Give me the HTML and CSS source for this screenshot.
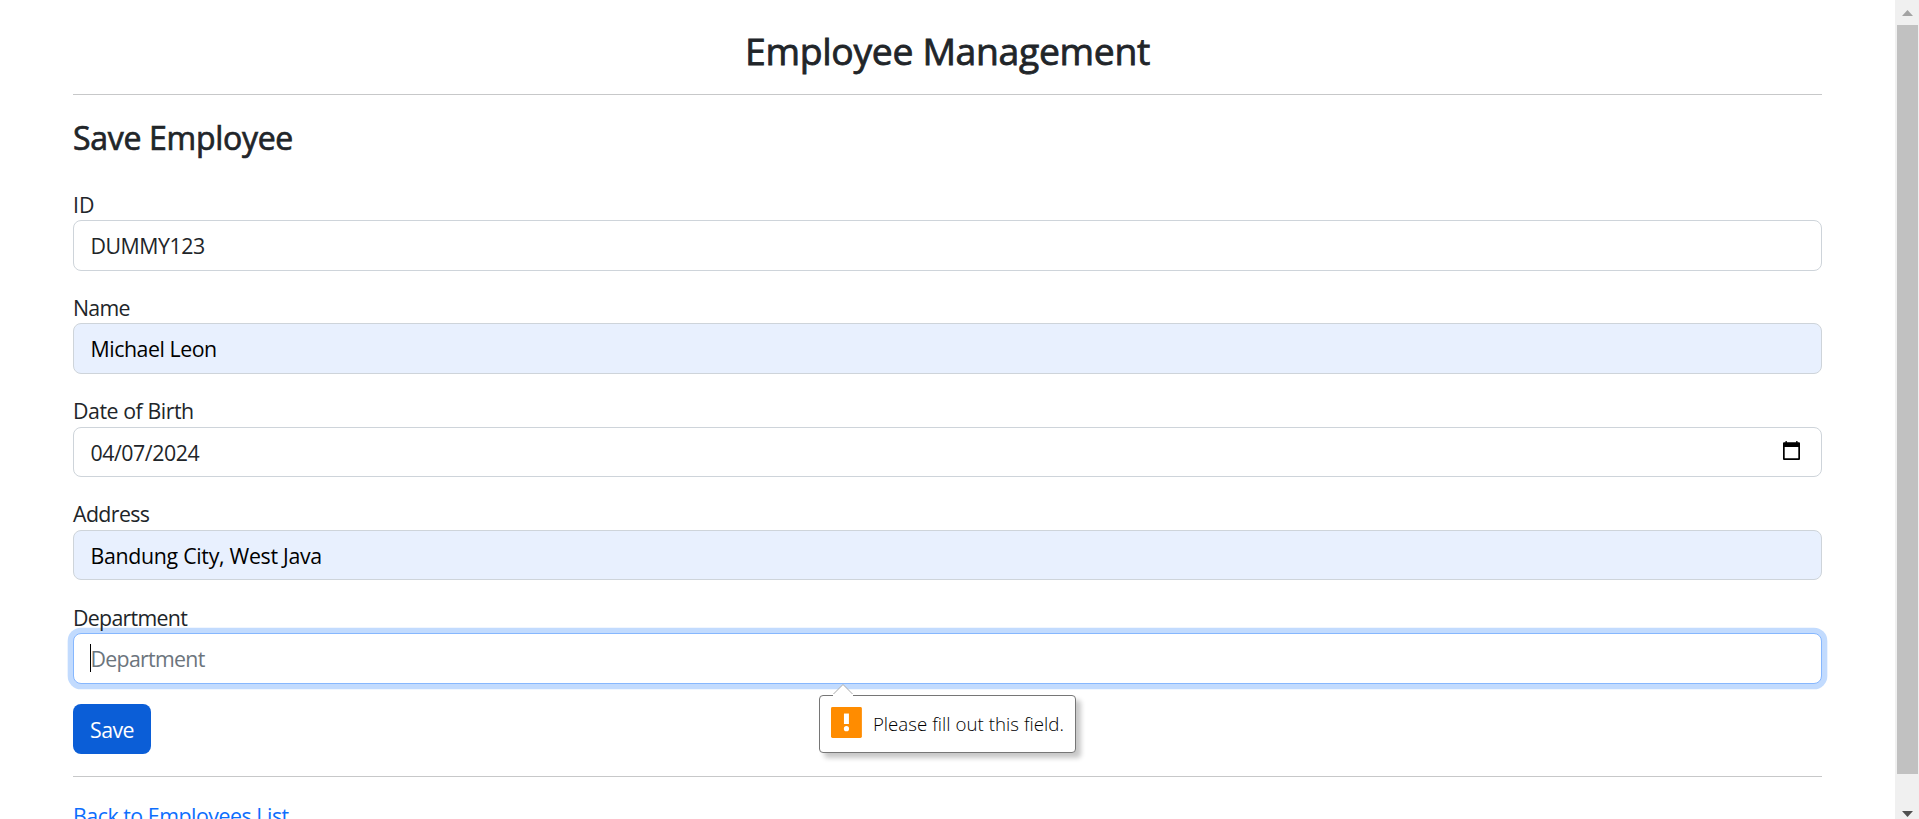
FILE: index.html
```html
<!DOCTYPE html>
<html lang="en">
<head>
<meta charset="utf-8">
<title>Employee Management</title>
<link rel="stylesheet" href="styles.css">
</head>
<body>
<div class="viewport">
  <main class="page">
    <h2 class="title"><span class="title-text">Employee Management</span></h2>
    <hr class="rule">
    <h3 class="subtitle"><span class="subtitle-text">Save Employee</span></h3>
    <form class="form">
      <div class="group">
        <label class="label"><span class="t-id">ID</span></label>
        <div class="control"><span class="t-dummy">DUMMY123</span></div>
      </div>
      <div class="group">
        <label class="label"><span class="t-name">Name</span></label>
        <div class="control autofill"><span class="t-michael">Michael Leon</span></div>
      </div>
      <div class="group">
        <label class="label raised"><span class="t-dob">Date of Birth</span></label>
        <div class="control date"><span class="t-date">04/07/2024</span>
          <svg class="calendar" viewBox="0 0 17 19" width="17" height="19"><path fill="#000" fill-rule="evenodd" d="M2.500 0h1.300v1.300h9.400V0h1.300v1.300H16a1 1 0 0 1 1 1V18a1 1 0 0 1-1 1H1a1 1 0 0 1-1-1V2.300a1 1 0 0 1 1-1h1.500zM1.700 6v11.300h13.600V6z"/></svg>
        </div>
      </div>
      <div class="group">
        <label class="label raised"><span class="t-address">Address</span></label>
        <div class="control autofill lowered"><span class="t-bandung">Bandung City, West Java</span></div>
      </div>
      <div class="group last">
        <label class="label"><span class="t-department">Department</span></label>
        <div class="control focused"><span class="caret"></span><span class="placeholder t-department">Department</span>
          <div class="bubble">
            <svg class="bubble-arrow" width="20" height="12" viewBox="0 0 20 12"><path d="M0 10.500 10 .5l10 10V12H0z" fill="#fff"/><path d="M.5 10 10 .5 19.500 10" fill="none" stroke="#aaa"/></svg>
            <svg class="warn" width="31" height="31" viewBox="0 0 31 31"><rect width="31" height="31" rx="1.500" fill="#ff8c00"/><path d="M13 6.500h5v10.500h-5z" fill="#fff"/><circle cx="15.500" cy="21.700" r="2.600" fill="#fff"/></svg>
            <span class="bubble-text">Please fill out this field.</span>
          </div>
        </div>
      </div>
      <button class="save" type="button"><span class="t-save">Save</span></button>
    </form>
    <hr class="rule lower">
    <a class="back"><span class="t-back">Back to Employees List</span></a>
  </main>
  <div class="scrollbar">
    <svg class="arrow" width="11" height="6" viewBox="0 0 11 6"><path d="M0 6 5.500 0 11 6z" fill="#a3a3a3"/></svg>
    <div class="thumb"></div>
    <svg class="arrow" width="11" height="6" viewBox="0 0 11 6"><path d="M0 0 5.500 6 11 0z" fill="#505050"/></svg>
  </div>
</div>
</body>
</html>
```
FILE: styles.css
```css
*, *::before, *::after { box-sizing: border-box; }
body {
  margin: 0;
  overflow: hidden;
  background: #fff;
  color: #212529;
  font-family: "Open Sans", "Noto Sans", sans-serif;
  font-size: 21.333px;
  line-height: 32px;
}
.viewport { display: flex; height: 819px; overflow: hidden; }
.page { flex: 1; padding: 30px 73px 0; overflow: hidden; height: 819px; }
.title { margin: 0; height: 64px; font-size: 37.333px; line-height: 41px; font-weight: 400; text-align: center; -webkit-text-stroke: .8px #212529; letter-spacing: -.33px; }
.rule { margin: 0; border: 0; height: 1px; background: #c7c8c9; }
.subtitle { margin: 0; padding-top: 21px; height: 93.100px; font-size: 32px; line-height: 44px; font-weight: 400; -webkit-text-stroke: .7px #212529; letter-spacing: -.3px; }
.form { display: flex; flex-direction: column; align-items: stretch; }
.group { display: flex; flex-direction: column; height: 82.660px; margin-bottom: 20.670px; }
.group.last { margin-bottom: 20.200px; }
.label { display: block; position: relative; z-index: 1; height: 31.900px; line-height: 33px; flex-shrink: 0; }
.label.raised { line-height: 31px; }
.control {
  position: relative;
  display: flex;
  align-items: center;
  flex-shrink: 0;
  height: 50.760px;
  padding: 0 16.500px;
  border: 1px solid #ced4da;
  border-radius: 8px;
  background: #fff;
}
.autofill { background: #e8f0fe; color: #000; }
.lowered { height: 50px; padding-top: 2px; }
.date { justify-content: space-between; padding-right: 21px; padding-top: 2px; height: 50px; }
.calendar { margin-top: -4px; }
.focused { border-color: #86b7fe; box-shadow: 0 0 0 5.330px #c2dbfe; }
.placeholder { color: #6c757d; }
.caret { position: absolute; left: 16px; top: 10px; width: 1px; height: 28px; background: #000; }
.t-dummy { padding-top: 1px; letter-spacing: -.45px; }
.t-name { letter-spacing: -.75px; }
.t-michael { letter-spacing: -.45px; }
.t-dob { letter-spacing: -.45px; }
.t-date { letter-spacing: -.45px; }
.t-address { letter-spacing: -.6px; }
.t-bandung { letter-spacing: -.3px; }
.t-department { letter-spacing: -.7px; }
.t-back { letter-spacing: -.47px; }
.t-save { letter-spacing: -.6px; }
.save {
  align-self: flex-start;
  width: 78px;
  height: 50px;
  padding: 2px 0 0;
  border: 0;
  border-radius: 8px;
  background: #0b5ed7;
  color: #fff;
  font: inherit;
}
.lower { margin-top: 22px; }
.back { display: block; margin-top: 23px; color: #0d6efd; }
.bubble {
  position: absolute;
  left: 745px;
  top: 61px;
  display: flex;
  align-items: center;
  gap: 11px;
  width: 257px;
  height: 58px;
  padding: 0 11px 2px;
  border: 1px solid #767676;
  border-radius: 4px;
  background: #fff;
  box-shadow: 5px 5px 5px rgba(0, 0, 0, .22);
  color: #000;
}
.warn { margin-top: -2px; }
.bubble-arrow { position: absolute; left: 13px; top: -12px; }
.bubble-text { font-size: 18.670px; font-weight: 300; white-space: nowrap; padding-top: 2px; letter-spacing: .04px; }
.scrollbar { display: flex; flex-direction: column; width: 24px; padding-top: 10px; background: #f0f0f0; }
.arrow { margin-left: 7px; }
.thumb { height: 749px; margin: 9px 1px 37px 2px; flex-shrink: 0; background: #c1c1c1; }
```
